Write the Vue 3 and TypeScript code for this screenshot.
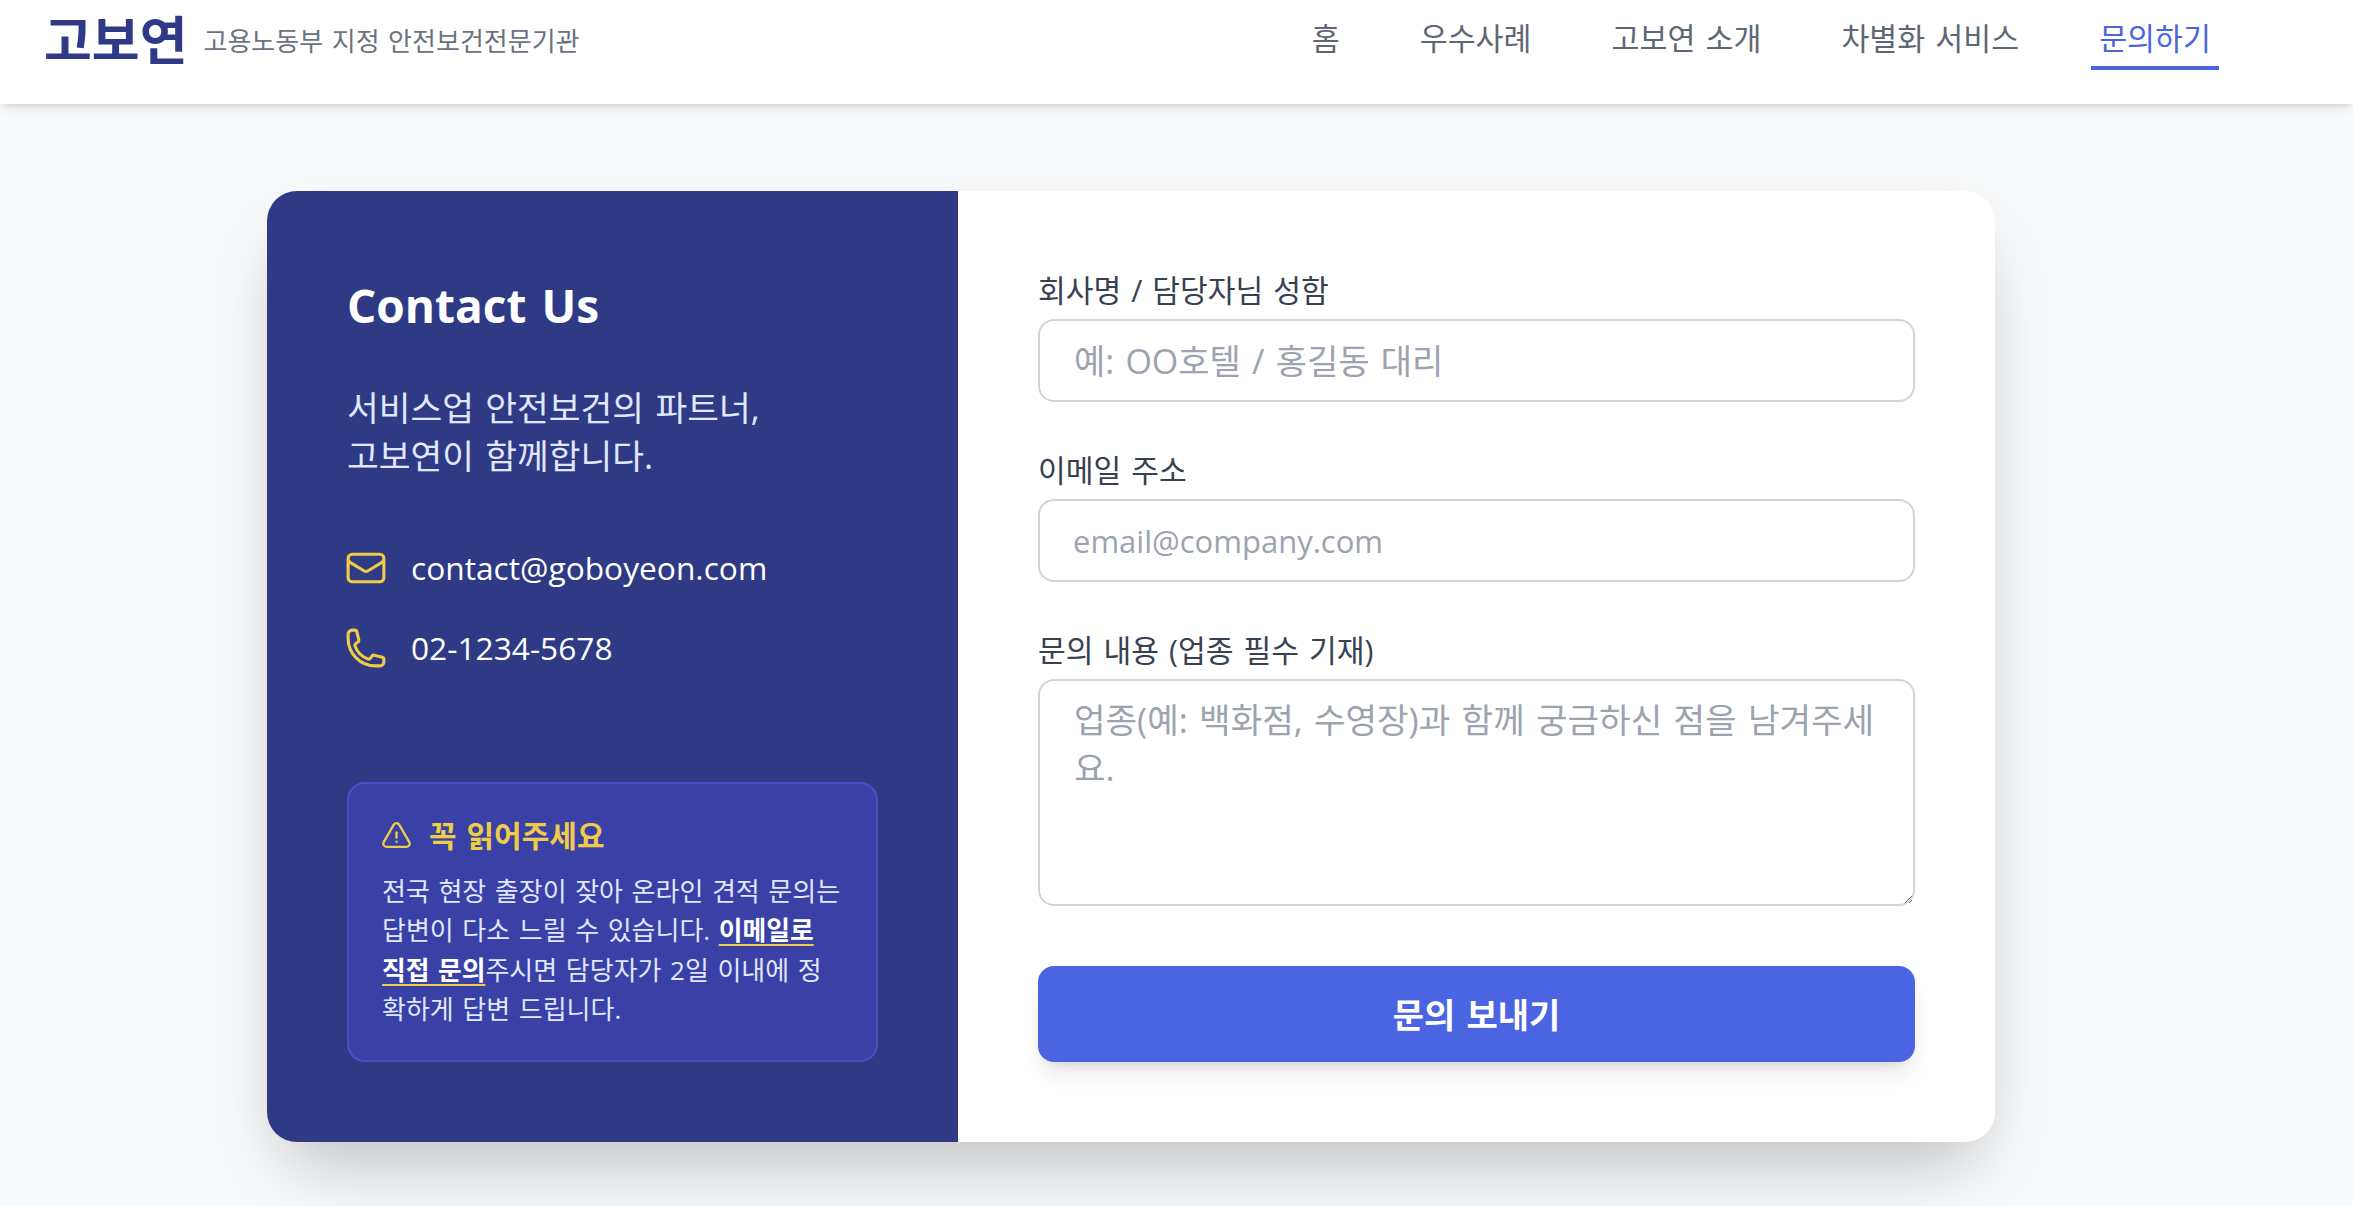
<script setup lang="ts">
const navItems = ['홈', '우수사례', '고보연 소개', '차별화 서비스', '문의하기'];
</script>

<template>
  <div class="page">
    <header class="header">
      <div class="brand">
        <span class="logo">고보연</span>
        <span class="tagline">고용노동부 지정 안전보건전문기관</span>
      </div>
      <nav class="nav">
        <a v-for="item in navItems" :key="item" :class="['nav-link', { active: item === '문의하기' }]">{{ item }}</a>
      </nav>
    </header>

    <main class="main">
      <section class="card">
        <div class="info">
          <h2 class="title">Contact Us</h2>
          <p class="lead">서비스업 안전보건의 파트너,<br />고보연이 함께합니다.</p>
          <div class="contact-row">
            <svg class="icon" viewBox="0 0 24 24" fill="none" stroke="#eecb48" stroke-width="1.7" stroke-linecap="round" stroke-linejoin="round">
              <path d="M21.75 6.75v10.5a2.25 2.25 0 0 1-2.25 2.25h-15a2.25 2.25 0 0 1-2.25-2.25V6.75m19.5 0A2.25 2.25 0 0 0 19.5 4.5h-15a2.25 2.25 0 0 0-2.25 2.25m19.5 0v.243a2.25 2.25 0 0 1-1.07 1.916l-7.5 4.615a2.25 2.25 0 0 1-2.36 0L3.32 8.91a2.25 2.25 0 0 1-1.07-1.916V6.75" />
            </svg>
            <span>contact@goboyeon.com</span>
          </div>
          <div class="contact-row">
            <svg class="icon" viewBox="0 0 24 24" fill="none" stroke="#eecb48" stroke-width="1.7" stroke-linecap="round" stroke-linejoin="round">
              <path d="M2.25 6.75c0 8.284 6.716 15 15 15h2.25a2.25 2.25 0 0 0 2.25-2.25v-1.372c0-.516-.351-.966-.852-1.091l-4.423-1.106c-.44-.11-.902.055-1.173.417l-.97 1.293c-.282.376-.769.542-1.21.38a12.035 12.035 0 0 1-7.143-7.143c-.162-.441.004-.928.38-1.21l1.293-.97c.363-.271.527-.734.417-1.173L6.963 3.102a1.125 1.125 0 0 0-1.091-.852H4.5A2.25 2.25 0 0 0 2.25 4.5v2.25Z" />
            </svg>
            <span>02-1234-5678</span>
          </div>
          <div class="notice">
            <div class="notice-head">
              <svg class="notice-icon" viewBox="0 0 24 24" fill="none" stroke="#eecb48" stroke-width="1.7" stroke-linecap="round" stroke-linejoin="round">
                <path d="M12 9v3.75m-9.303 3.376c-.866 1.5.217 3.374 1.948 3.374h14.71c1.73 0 2.813-1.874 1.948-3.374L13.949 3.378c-.866-1.5-3.032-1.5-3.898 0L2.697 16.126ZM12 15.75h.007v.008H12v-.008Z" />
              </svg>
              <span>꼭 읽어주세요</span>
            </div>
            <p class="notice-text">전국 현장 출장이 잦아 온라인 견적 문의는 답변이 다소 느릴 수 있습니다. <strong>이메일로 직접 문의</strong>주시면 담당자가 2일 이내에 정확하게 답변 드립니다.</p>
          </div>
        </div>

        <form class="form" @submit.prevent>
          <label class="field">
            <span class="label">회사명 / 담당자님 성함</span>
            <input class="control" type="text" placeholder="예: OO호텔 / 홍길동 대리" />
          </label>
          <label class="field">
            <span class="label">이메일 주소</span>
            <input class="control email" type="email" placeholder="email@company.com" />
          </label>
          <label class="field">
            <span class="label">문의 내용 (업종 필수 기재)</span>
            <textarea class="control area" placeholder="업종(예: 백화점, 수영장)과 함께 궁금하신 점을 남겨주세요."></textarea>
          </label>
          <button class="submit" type="submit">문의 보내기</button>
        </form>
      </section>
    </main>
  </div>
</template>

<style>
html,
body {
  margin: 0;
  background: #f8fafc;
}
</style>

<style scoped>
.page {
  font-family: "Open Sans", "Noto Sans CJK KR", sans-serif;
  min-height: 1206px;
  background: #f8fafc;
  color: #374151;
}
.page * {
  word-spacing: 0.07em;
}
.header {
  height: 104px;
  box-sizing: border-box;
  background: #fff;
  box-shadow: 0 6px 9px -2px rgba(0, 0, 0, 0.1), 0 3px 6px -3px rgba(0, 0, 0, 0.1);
  display: flex;
  justify-content: space-between;
  align-items: flex-start;
  padding: 0 134px 0 44px;
}
.brand {
  display: flex;
  align-items: center;
  gap: 16px;
  height: 80px;
}
.logo {
  font-size: 52px;
  font-weight: 700;
  color: #2e3a87;
  line-height: 1;
}
.tagline {
  font-size: 26px;
  color: #6b7280;
}
.nav {
  display: flex;
  gap: 64px;
  height: 70px;
  align-items: stretch;
}
.nav-link {
  font-size: 30.4px;
  line-height: 78px;
  color: #5f6675;
  padding: 0 8px;
  box-sizing: border-box;
}
.nav-link.active {
  color: #4b65e2;
  border-bottom: 4px solid #4b65e2;
}
.main {
  display: flex;
  padding: 87px 0 0 267px;
}
.card {
  width: 1728px;
  height: 951px;
  display: flex;
  border-radius: 30px;
  overflow: hidden;
  background: #fff;
  box-shadow: 0 37px 75px -18px rgba(0, 0, 0, 0.25);
}
.info {
  width: 691px;
  box-sizing: border-box;
  padding: 80px;
  background: #2e3a84;
  color: #fff;
  display: flex;
  flex-direction: column;
}
.title {
  margin: 0 0 45px;
  font-size: 46px;
  font-weight: 700;
  line-height: 68px;
}
.lead {
  margin: 0 0 64px;
  font-size: 34.5px;
  line-height: 48px;
  color: #e0e7ff;
}
.contact-row {
  display: flex;
  align-items: center;
  gap: 23px;
  margin-bottom: 32px;
  font-size: 31.7px;
  line-height: 48px;
}
.icon {
  width: 44px;
  height: 44px;
  margin-left: -3px;
}
.notice {
  margin-top: auto;
  box-sizing: border-box;
  height: 280px;
  padding: 34px 33px;
  background: #3a41a6;
  border: 2px solid #4353c4;
  border-radius: 18px;
}
.notice-head {
  display: flex;
  align-items: center;
  gap: 16px;
  font-size: 30px;
  font-weight: 700;
  line-height: 36px;
  color: #eecb48;
  margin-bottom: 18px;
}
.notice-icon {
  width: 33px;
  height: 33px;
  margin-left: -2px;
}
.notice-text {
  margin: 0;
  font-size: 26px;
  line-height: 39.4px;
  color: #e0e7ff;
}
.notice-text strong {
  color: #fff;
  font-size: 25.8px;
  text-decoration: underline 2px #eecb48;
  text-underline-offset: 4px;
  text-decoration-skip-ink: none;
}
.form {
  flex: 1;
  box-sizing: border-box;
  padding: 79px 80px 80px;
  display: flex;
  flex-direction: column;
}
.field {
  display: flex;
  flex-direction: column;
  margin-bottom: 48px;
}
.label {
  font-size: 30.2px;
  line-height: 42px;
  margin-bottom: 7px;
}
.control {
  box-sizing: border-box;
  width: 100%;
  height: 83px;
  border: 2px solid #d1d5db;
  border-radius: 16px;
  padding: 0 34px;
  font: inherit;
  font-size: 34px;
  color: #1f2937;
  outline: none;
  background: #fff;
}
.control::placeholder {
  color: #9ca3af;
}
.email {
  font-size: 31px;
  padding: 0 33px;
}
.area {
  height: 227px;
  padding: 15px 34px;
  font-size: 34.3px;
  line-height: 48px;
}
.submit {
  margin-top: auto;
  height: 96px;
  border: none;
  border-radius: 16px;
  padding: 0 0 2px;
  background: #4b65e2;
  color: #fff;
  font: inherit;
  font-size: 34px;
  font-weight: 700;
  box-shadow: 0 15px 22px -4px rgba(0, 0, 0, 0.1), 0 6px 9px -6px rgba(0, 0, 0, 0.1);
}
</style>
